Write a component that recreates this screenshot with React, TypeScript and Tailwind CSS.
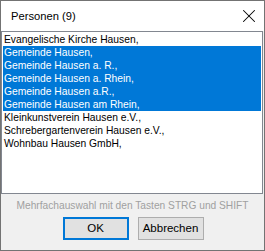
import { X } from "lucide-react";

const items = [
  { name: "Evangelische Kirche Hausen,", selected: false },
  { name: "Gemeinde Hausen,", selected: true },
  { name: "Gemeinde Hausen a. R.,", selected: true },
  { name: "Gemeinde Hausen a. Rhein,", selected: true },
  { name: "Gemeinde Hausen a.R.,", selected: true },
  { name: "Gemeinde Hausen am Rhein,", selected: true },
  { name: "Kleinkunstverein Hausen e.V.,", selected: false },
  { name: "Schrebergartenverein Hausen e.V.,", selected: false },
  { name: "Wohnbau Hausen GmbH,", selected: false },
];

export default function App() {
  return (
    <div className="flex h-[251px] w-[265px] flex-col border border-[#737373] bg-[#f0f0f0] font-['Liberation_Sans',sans-serif]">
      {/* Title bar */}
      <div className="flex h-[30px] shrink-0 items-center justify-between bg-white pl-[10px] pr-[4px]">
        <span className="text-[11.2px] text-black">Personen (9)</span>
        <X className="h-[22px] w-[22px] text-black" strokeWidth={1.1} />
      </div>

      {/* List */}
      <div className="h-[163px] w-[262px] shrink-0 border border-[#828790] bg-white p-px">
        {items.map((item) => (
          <div
            key={item.name}
            className={
              item.selected
                ? "h-[13px] bg-[#0078d7] pl-px text-[10.3px] leading-[13px] text-white"
                : "h-[13px] pl-px text-[10.3px] leading-[13px] text-black"
            }
          >
            {item.name}
          </div>
        ))}
      </div>

      {/* Hint */}
      <div className="flex h-[23px] items-center justify-center text-[10.2px] text-[#a0a0a0]">
        Mehrfachauswahl mit den Tasten STRG und SHIFT
      </div>

      {/* Buttons */}
      <div className="flex justify-center gap-[9px] pl-px">
        <button className="h-[23px] w-[66px] border-2 border-[#0078d7] bg-[#e1e1e1] text-[11.5px] text-black">
          OK
        </button>
        <button className="h-[23px] w-[66px] border border-[#adadad] bg-[#e1e1e1] text-[11.5px] text-black">
          Abbrechen
        </button>
      </div>
    </div>
  );
}
